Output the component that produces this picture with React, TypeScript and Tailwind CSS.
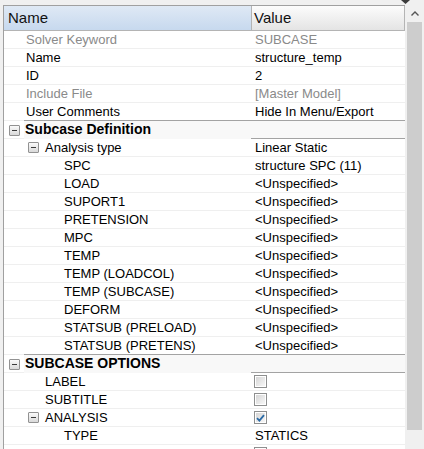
import React from "react";

type Row = {
  label: string;
  value?: string;
  kind?: "item" | "section" | "group";
  indent?: number;
  muted?: boolean;
  check?: boolean;
};

const unspecified = [
  "LOAD",
  "SUPORT1",
  "PRETENSION",
  "MPC",
  "TEMP",
  "TEMP (LOADCOL)",
  "TEMP (SUBCASE)",
  "DEFORM",
  "STATSUB (PRELOAD)",
  "STATSUB (PRETENS)",
];

const rows: Row[] = [
  { label: "Solver Keyword", value: "SUBCASE", indent: 22, muted: true },
  { label: "Name", value: "structure_temp", indent: 22 },
  { label: "ID", value: "2", indent: 22 },
  { label: "Include File", value: "[Master Model]", indent: 22, muted: true },
  { label: "User Comments", value: "Hide In Menu/Export", indent: 22 },
  { label: "Subcase Definition", kind: "section" },
  { label: "Analysis type", value: "Linear Static", kind: "group", indent: 24 },
  { label: "SPC", value: "structure SPC (11)", indent: 60 },
  ...unspecified.map((l) => ({ label: l, value: "<Unspecified>", indent: 60 })),
  { label: "SUBCASE OPTIONS", kind: "section" },
  { label: "LABEL", check: false, indent: 41 },
  { label: "SUBTITLE", check: false, indent: 41 },
  { label: "ANALYSIS", check: true, kind: "group", indent: 24 },
  { label: "TYPE", value: "STATICS", indent: 60 },
  { label: "", check: false, indent: 41 },
];

// tree expander "minus" box
function Minus() {
  return (
    <div className="w-[11px] h-[11px] shrink-0 border border-[#929292] rounded-[1px] bg-gradient-to-b from-[#fafafa] to-[#d9d9d9] flex items-center justify-center">
      <div className="w-[5px] h-px bg-[#3a3a3a]" />
    </div>
  );
}

function Check({ checked }: { checked: boolean }) {
  return (
    <div className="w-[13px] h-[13px] border border-[#8e8f8f] bg-white p-px">
      <div className="w-full h-full bg-gradient-to-br from-[#d6d6d6] to-[#f7f7f7] flex items-center justify-center">
        {checked && (
          <svg width="9" height="8" viewBox="0 0 9 8">
            <path d="M1 4.2 L3.4 6.6 L8 1.2" fill="none" stroke="#2a6aa6" strokeWidth="1.8" />
          </svg>
        )}
      </div>
    </div>
  );
}

function TreeRow({ row }: { row: Row }) {
  const color = row.muted ? "text-[#8a8a8a]" : "text-black";

  if (row.kind === "section") {
    return (
      <div className="flex h-[19px] -mt-px">
        <div className="w-[247px] flex">
          <div className="w-[20px] pl-[5px] pt-[5px] border-b border-[#efefef]">
            <Minus />
          </div>
          <div className="flex-1 border-t border-[#a3a3a3] bg-[#f8f8f8] pl-px text-[14px] font-bold leading-[17px] text-black">
            {row.label}
          </div>
        </div>
        <div className="w-[154px] border-y border-[#a3a3a3] bg-[#f8f8f8]" />
      </div>
    );
  }

  return (
    <div className="flex h-[18px] border-b border-[#efefef] text-[13px] leading-[17px]">
      <div className="w-[247px] flex items-center">
        {row.kind === "group" ? (
          <div className="flex items-center" style={{ paddingLeft: row.indent }}>
            <Minus />
            <span className={`ml-[6px] ${color}`}>{row.label}</span>
          </div>
        ) : (
          <span className={color} style={{ paddingLeft: row.indent }}>
            {row.label}
          </span>
        )}
      </div>
      <div className="w-[154px] flex items-center">
        {row.check !== undefined ? (
          <div className="pl-[3px]">
            <Check checked={row.check} />
          </div>
        ) : (
          <span className={`pl-[4px] whitespace-nowrap ${color}`}>{row.value}</span>
        )}
      </div>
    </div>
  );
}

export default function App() {
  return (
    <div className="relative w-[424px] h-[449px] overflow-hidden bg-[#f0f0f0] font-['Liberation_Sans',Arial,sans-serif]">
      {/* little dropdown marker peeking from above */}
      <svg className="absolute left-[401px] top-0" width="9" height="4" viewBox="0 0 9 4">
        <path d="M0 0 H9 L4.5 4 Z" fill="#3c3c3c" />
      </svg>

      <div className="h-[5px]" />
      <div className="flex h-[444px]">
        <div className="w-[3px]" />

        {/* property tree */}
        <div className="w-[402px] border-l border-t border-[#a0a0a0] bg-white overflow-hidden">
          <div className="flex h-[25px] border-b border-[#b4b4b4]">
            <div className="w-[247px] bg-gradient-to-b from-[#dfe9f5] to-[#c7d9ee] pl-[4px] flex items-center text-[15px] text-[#111]">
              Name
            </div>
            <div className="w-[154px] border-l border-r border-[#b4b4b4] bg-gradient-to-b from-[#fcfcfc] to-[#e4e4e4] pl-[2px] flex items-center text-[15px] text-[#111]">
              Value
            </div>
          </div>
          {rows.map((r, i) => (
            <TreeRow key={i} row={r} />
          ))}
        </div>

        {/* scrollbar */}
        <div className="w-[19px] flex flex-col bg-[#f0f0f0]">
          <div className="h-[17px] flex items-center justify-center">
            <svg width="8" height="5" viewBox="0 0 8 5">
              <path d="M0.5 4.5 L4 1 L7.5 4.5" fill="none" stroke="#555" strokeWidth="1.4" />
            </svg>
          </div>
          <div className="h-[408px] px-[2px]">
            <div className="h-full bg-[#cdcdcd]" />
          </div>
        </div>
      </div>
    </div>
  );
}
